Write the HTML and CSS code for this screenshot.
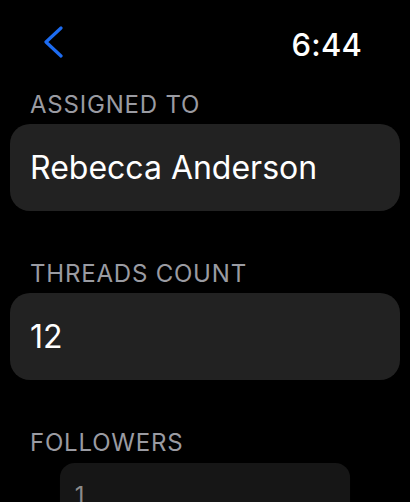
FILE: index.html
```html
<!DOCTYPE html>
<html>
<head>
<meta charset="utf-8">
<link rel="stylesheet" href="styles.css">
</head>
<body>
<div class="screen">
  <div class="header">
    <svg class="back" width="24" height="34" viewBox="0 0 24 34">
      <path d="M18 2 L3 16 L18 30" fill="none" stroke="#1d6cf2" stroke-width="3.2" stroke-linecap="round" stroke-linejoin="round"/>
    </svg>
    <div class="time">6:44</div>
  </div>
  <div class="label first">ASSIGNED TO</div>
  <div class="card">Rebecca Anderson</div>
  <div class="label">THREADS COUNT</div>
  <div class="card">12</div>
  <div class="label">FOLLOWERS</div>
  <div class="card dim">1</div>
</div>
</body>
</html>
```
FILE: styles.css
```css
html, body {
  margin: 0;
  padding: 0;
  background: #000;
  height: 100%;
  overflow: hidden;
}
body {
  font-family: Inter, "Noto Sans", sans-serif;
  color: #fff;
}
.screen {
  padding: 0 10px;
}
.header {
  display: flex;
  justify-content: space-between;
  align-items: center;
  height: 38px;
  padding: 26px 38px 0 33px;
}
.back {
  display: block;
  margin-top: -4px;
}
.time {
  font-size: 31px;
  line-height: 38px;
  font-weight: 500;
  letter-spacing: 0.2px;
}
.label {
  font-size: 24px;
  line-height: 28px;
  color: #9a9ba2;
  padding-left: 20px;
  margin-top: 49px;
  margin-bottom: 5px;
  letter-spacing: 0.8px;
}
.label.first {
  margin-top: 27px;
}
.card {
  background: #222222;
  border-radius: 20px;
  height: 87px;
  display: flex;
  align-items: center;
  padding: 0 20px;
  font-size: 32px;
  letter-spacing: 0;
}
.card.dim {
  background: #161616;
  color: #8c8c8c;
  transform: scale(0.744);
  transform-origin: top center;
  margin-top: 6px;
}
```
